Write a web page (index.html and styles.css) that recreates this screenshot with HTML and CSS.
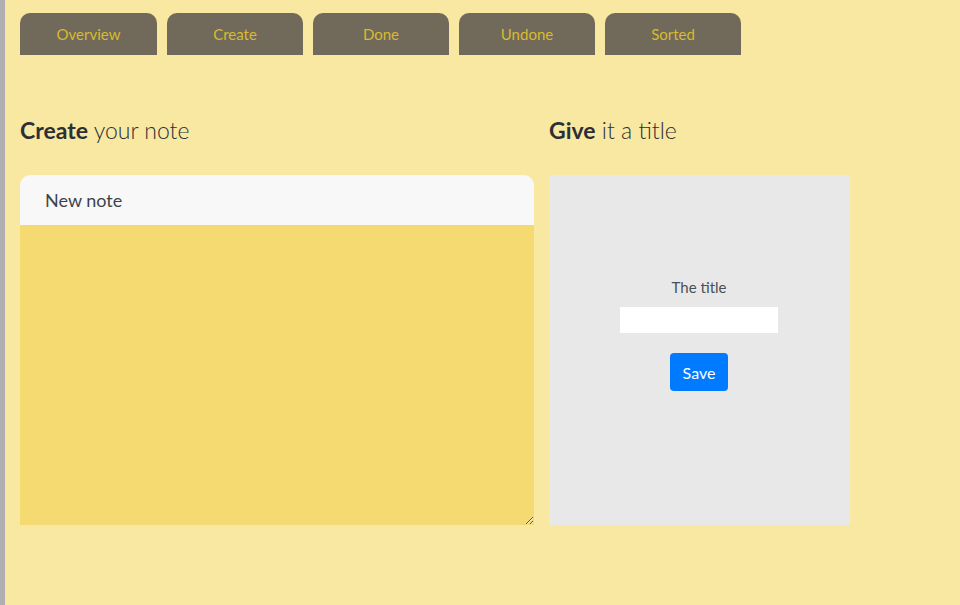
FILE: index.html
```html
<!DOCTYPE html>
<html>
<head>
<meta charset="utf-8">
<link rel="stylesheet" href="styles.css">
</head>
<body>
<div class="page">
  <nav class="tabs">
    <a class="tab">Overview</a>
    <a class="tab">Create</a>
    <a class="tab">Done</a>
    <a class="tab">Undone</a>
    <a class="tab">Sorted</a>
  </nav>
  <main class="content">
    <section class="left">
      <h2 class="heading"><b>Create</b> your note</h2>
      <div class="note">
        <div class="note-head">New note</div>
        <textarea class="note-body"></textarea>
      </div>
    </section>
    <section class="right">
      <h2 class="heading"><b>Give</b> it a title</h2>
      <div class="panel">
        <label class="label">The title</label>
        <input class="title-input" type="text">
        <button class="save">Save</button>
      </div>
    </section>
  </main>
</div>
</body>
</html>
```
FILE: styles.css
```css
html, body {
  margin: 0;
  padding: 0;
  height: 100%;
}
body {
  background: #f9e8a1;
  font-family: Lato, "Open Sans", sans-serif;
  color: #343a40;
}
.page {
  min-height: 100%;
  border-left: 5px solid #b0aeb1;
  box-sizing: border-box;
  padding: 13px 15px 0;
}
.tabs {
  display: flex;
  gap: 10px;
}
.tab {
  width: 137px;
  height: 42px;
  box-sizing: border-box;
  background: #716a5a;
  border-radius: 10px 10px 0 0;
  color: #d8bb2f;
  font-size: 15px;
  display: flex;
  align-items: center;
  justify-content: center;
}
.tab:nth-child(n+2) { width: 136px; }
.content {
  display: flex;
  gap: 15px;
  margin-top: 61px;
}
.heading {
  margin: 0 0 30px;
  font-size: 23px;
  font-weight: 300;
  line-height: 29px;
  color: #2b3036;
}
.heading b {
  font-weight: 700;
}
.left { width: 514px; }
.note {
  display: flex;
  flex-direction: column;
}
.note-head {
  height: 50px;
  background: #f8f8f8;
  border-radius: 10px 10px 0 0;
  padding: 0 25px;
  display: flex;
  align-items: center;
  font-size: 18px;
  color: #3d4349;
}
.note-body {
  height: 300px;
  margin: 0;
  border: 0;
  background: #f4da70;
  display: block;
  box-sizing: border-box;
  outline: none;
}
.right { width: 301px; }
.panel {
  height: 350px;
  background: #e8e8e8;
  display: flex;
  flex-direction: column;
  align-items: center;
  padding: 102px 1px 0 0;
  box-sizing: border-box;
}
.label {
  font-size: 15px;
  line-height: 20px;
  color: #4a5057;
  margin-bottom: 10px;
}
.title-input {
  width: 158px;
  height: 26px;
  border: 0;
  background: #fff;
  box-sizing: border-box;
  margin: 0 0 20px;
}
.save {
  width: 58px;
  height: 38px;
  background: #007bff;
  color: #fff;
  border: 0;
  border-radius: 4px;
  font-family: inherit;
  font-size: 16px;
}
```
